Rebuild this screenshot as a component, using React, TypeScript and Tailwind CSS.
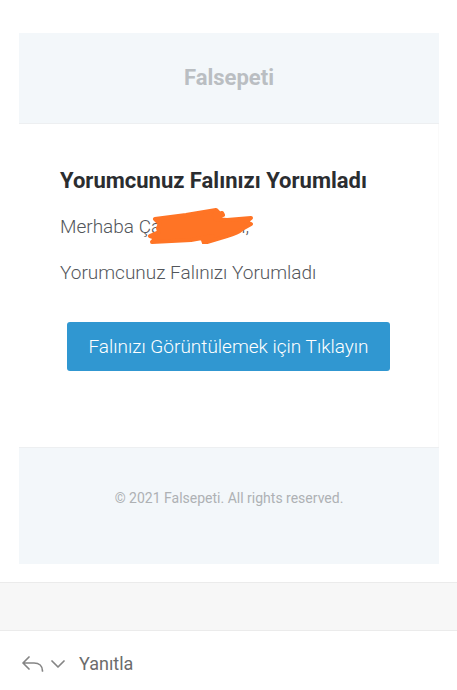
function Scribble() {
  return (
    <svg
      className="pointer-events-none absolute -top-2 left-[86px] h-[40px] w-[110px]"
      viewBox="0 0 110 40"
      fill="#ff7425"
      stroke="#ff7425"
      strokeWidth="4"
      strokeLinejoin="round"
      strokeLinecap="round"
      aria-hidden="true"
    >
      <path d="M9 15 L40 11 L70 6 L72 8 L68 11 L76 9 L77 11 L69 15 L81 16 L105 14 L100 18 L105 20 L96 25 Q92 29 81 32 L58 39 L57 36 L67 32 L45 36 L6 38 L10 34 L4 32 L13 28 L12 24 L14 20 Z" />
    </svg>
  )
}

function ReplyIcon() {
  return (
    <svg
      className="h-5 w-[22px]"
      viewBox="0 0 22 20"
      fill="none"
      stroke="#858585"
      strokeWidth="1.7"
      strokeLinecap="round"
      strokeLinejoin="round"
      aria-hidden="true"
    >
      <path d="M7 3 L1 9 L7 15 M1.500 9 H12 C17 9 20.500 12 20.500 17" />
    </svg>
  )
}

function ChevronIcon() {
  return (
    <svg
      className="h-5 w-[14px]"
      viewBox="0 0 14 20"
      fill="none"
      stroke="#858585"
      strokeWidth="1.7"
      strokeLinecap="round"
      strokeLinejoin="round"
      aria-hidden="true"
    >
      <path d="M1 7 L7 13 L13 7" />
    </svg>
  )
}

export default function App() {
  return (
    <div className="min-h-screen bg-white font-[Roboto,sans-serif]">
      <main className="pt-[33px] pr-[18px] pb-[18px] pl-[19px]">
        <header className="border-b border-[#edeff1] bg-[#f3f7fa] py-[30px] text-center text-[22px] leading-[30px] font-bold text-[#babec2]">
          Falsepeti
        </header>

        <section className="border-r border-[#fafafa] px-[41px] pt-[42px] pb-[76px]">
          <h1 className="text-[22px] leading-[30px] font-bold whitespace-nowrap text-[#2b2d30]">
            Yorumcunuz Falınızı Yorumladı
          </h1>
          <p className="relative mt-4 text-[19px] leading-[30px] font-light text-[#53565b]">
            <span className="inline-block w-[175px]">Merhaba Ça</span>
            <span>n,</span>
            <Scribble />
          </p>
          <p className="mt-4 text-[19px] leading-[30px] font-light whitespace-nowrap text-[#53565b]">
            Yorumcunuz Falınızı Yorumladı
          </p>
          <div className="mt-[34px] text-center">
            <a
              href="#"
              className="inline-block rounded-[3px] bg-[#3097d1] px-[21px] py-[10px] text-[19px] leading-[29px] font-light whitespace-nowrap text-white"
            >
              Falınızı Görüntülemek için Tıklayın
            </a>
          </div>
        </section>

        <footer className="border-t border-[#edeff1] bg-[#f3f7fa] pt-10 pb-14 text-center text-[14px] leading-5 text-[#aeb1b4]">
          © 2021 Falsepeti. All rights reserved.
        </footer>
      </main>

      <div className="h-[49px] border-y border-[#ebebeb] bg-[#f7f7f7]" />

      <div className="flex items-center px-[22px] pt-[18px] text-[#6c6c6c]">
        <button type="button" className="flex items-center gap-[7px]" aria-label="Yanıt seçenekleri">
          <ReplyIcon />
          <ChevronIcon />
        </button>
        <button type="button" className="ml-[14px] text-[18px] leading-[30px]">
          Yanıtla
        </button>
      </div>
    </div>
  )
}
